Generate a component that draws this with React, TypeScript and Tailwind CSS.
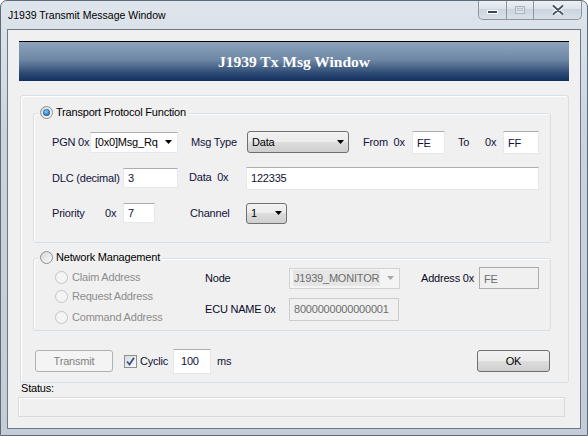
import React from 'react'

type RadioProps = { checked?: boolean; disabled?: boolean }

function Radio({ checked = false, disabled = false }: RadioProps) {
  return (
    <span
      className={
        'w-[13px] h-[13px] shrink-0 rounded-full border flex items-center justify-center ' +
        (disabled
          ? 'border-[#c4c4c4] bg-[#f4f4f4]'
          : 'border-[#8e8f8f] bg-[linear-gradient(135deg,#d6d6d6,#fbfbfb)]')
      }
    >
      {checked && (
        <span className="w-[7px] h-[7px] rounded-full bg-[radial-gradient(circle_at_45%_40%,#8ad8ff_0%,#2b74b8_55%,#163f72_100%)]" />
      )}
    </span>
  )
}

function Arrow({ color = '#000' }: { color?: string }) {
  return (
    <svg width="7" height="4" viewBox="0 0 7 4" className="shrink-0">
      <path d="M0 0h7L3.5 4z" fill={color} />
    </svg>
  )
}

const edit = 'bg-white border border-[#e3e9ef] border-t-[#abadb3] flex items-center pl-[4px] text-[#111133] shrink-0'
const button =
  'border border-[#707070] rounded-[3px] bg-[linear-gradient(#f2f2f2,#ebebeb_50%,#dddddd_50%,#cfcfcf)] flex items-center shrink-0'

export default function App() {
  return (
    <div className="w-[588px] h-[436px] overflow-hidden rounded-t-[7px] border border-[#5d6a78] bg-[linear-gradient(#dfe5ec,#cbd4de_30%,#c3ccd7)] font-['Liberation_Sans',Arial,sans-serif] text-[11px] text-black whitespace-nowrap">
      {/* title bar */}
      <div className="h-[28px] flex items-start">
        <div className="pl-[7px] mt-[8px] text-[10.5px] leading-[12px] text-black">J1939 Transmit Message Window</div>
        <div className="ml-auto mr-[5px] -mt-[1px] h-[20px] flex rounded-b-[5px] border border-t-0 border-[#8a96a4] overflow-hidden bg-[linear-gradient(#eef2f6,#dbe2ea_50%,#ccd5df_50%,#d8e0e8)]">
          <div className="w-[28px] flex items-center justify-center border-r border-[#8a96a4]">
            <span className="w-[11px] h-[4px] bg-[#3c4653] border border-white mt-[5px]" />
          </div>
          <div className="w-[27px] flex items-center justify-center border-r border-[#8a96a4]">
            <span className="w-[10px] h-[8px] border border-[#a9b3bd] bg-[#dde3e9] flex items-center justify-center">
              <span className="w-[6px] h-[3px] border border-[#b8c1ca]" />
            </span>
          </div>
          <div className="w-[47px] flex items-center justify-center">
            <svg width="12" height="10" viewBox="0 0 12 10">
              <path d="M1.5 1l9 8M10.5 1l-9 8" stroke="#ffffff" strokeWidth="4" strokeLinecap="round" />
              <path d="M1.5 1l9 8M10.5 1l-9 8" stroke="#4b5663" strokeWidth="2" strokeLinecap="round" />
            </svg>
          </div>
        </div>
      </div>

      {/* client area */}
      <div className="mx-[6px] h-[400px] border border-[#6c7a88] bg-[#f0f0f0] flex flex-col tracking-[-0.2px]">
        {/* banner */}
        <div className="ml-[11px] mt-[11px] w-[550px] h-[40px] border-t border-black bg-[linear-gradient(#8ca3bb,#6f88a5_45%,#2e4a74_80%,#13305f)] flex items-center justify-center tracking-normal">
          <span className="font-['Liberation_Serif',serif] font-bold text-[15.5px] text-white">J1939 Tx Msg Window</span>
        </div>

        {/* outer box */}
        <div className="ml-[12px] mt-[14px] w-[549px] h-[288px] rounded-[3px] border border-[#d5dfe5] shadow-[inset_1px_1px_0_#fff] flex flex-col">
          {/* transport protocol group */}
          <div className="ml-[12px] mt-[17px] w-[518px] h-[130px] rounded-[3px] border border-[#d5dfe5] shadow-[inset_1px_1px_0_#fff] flex flex-col text-[#12123a]">
            <div className="ml-[4px] -mt-[8px] h-[13px] px-[2px] self-start bg-[#f0f0f0] flex items-center gap-[3px] text-black">
              <Radio checked />
              <span>Transport Protocol Function</span>
            </div>

            <div className="mt-[12px] h-[22px] flex items-center pl-[18px]">
              <span className="w-[38px] shrink-0">PGN 0x</span>
              <div className={edit + ' w-[88px] h-[21px] border-[#dde3e9] pr-[5px] justify-between'}>
                <span className="text-black">[0x0]Msg_Rq</span>
                <Arrow />
              </div>
              <span className="ml-[13px] w-[56px] shrink-0">Msg Type</span>
              <div className={button + ' w-[102px] h-[22px] pl-[4px] pr-[4px] justify-between'}>
                <span className="text-black">Data</span>
                <Arrow />
              </div>
              <span className="ml-[14px] w-[49px] shrink-0">From&nbsp; 0x</span>
              <div className={edit + ' w-[33px] h-[23px] items-start pt-[3px]'}>FE</div>
              <span className="ml-[13px] w-[27px] shrink-0">To</span>
              <span className="w-[18px] shrink-0">0x</span>
              <div className={edit + ' w-[36px] h-[23px] items-start pt-[3px]'}>FF</div>
            </div>

            <div className="mt-[14px] h-[22px] flex items-center pl-[18px]">
              <span className="w-[71px] shrink-0">DLC (decimal)</span>
              <div className={edit + ' w-[55px] h-[20px]'}>3</div>
              <span className="ml-[11px] w-[57px] -mt-[2px] shrink-0">Data&nbsp; 0x</span>
              <div className={edit + ' w-[293px] h-[23px]'}>122335</div>
            </div>

            <div className="mt-[14px] h-[20px] flex items-center pl-[18px]">
              <span className="w-[53px] shrink-0">Priority</span>
              <span className="w-[18px] shrink-0">0x</span>
              <div className={edit + ' w-[32px] h-[20px]'}>7</div>
              <span className="ml-[35px] w-[56px] shrink-0">Channel</span>
              <div className={button + ' w-[41px] h-[21px] pl-[4px] pr-[4px] justify-between'}>
                <span className="text-black">1</span>
                <Arrow />
              </div>
            </div>
          </div>

          {/* network management group */}
          <div className="ml-[12px] mt-[15px] w-[518px] h-[73px] rounded-[3px] border border-[#d5dfe5] shadow-[inset_1px_1px_0_#fff] flex flex-col">
            <div className="ml-[4px] -mt-[8px] h-[13px] px-[2px] self-start bg-[#f0f0f0] flex items-center gap-[3px]">
              <Radio />
              <span>Network Management</span>
            </div>
            <div className="mt-[3px] flex items-start">
              <div className="ml-[21px] w-[150px] pt-[1px] flex flex-col text-[#8d8d8d] shrink-0">
                <div className="h-[19px] flex items-center gap-[4px]">
                  <Radio disabled />
                  <span>Claim Address</span>
                </div>
                <div className="h-[19px] flex items-center gap-[4px]">
                  <Radio disabled />
                  <span>Request Address</span>
                </div>
                <div className="mt-[2px] h-[19px] flex items-center gap-[4px]">
                  <Radio disabled />
                  <span>Command Address</span>
                </div>
              </div>
              <div className="flex flex-col text-[#0a0a28]">
                <div className="h-[22px] flex items-center">
                  <span className="w-[84px] shrink-0">Node</span>
                  <div className="w-[111px] h-[21px] shrink-0 border border-[#d2d2d2] bg-[#f4f4f4] flex items-center pl-[3px] pr-[5px] justify-between text-[#6d6d6d]">
                    <span className="bg-[#e6e6e6] px-[1px]">J1939_MONITOR</span>
                    <Arrow color="#a8a8a8" />
                  </div>
                  <span className="ml-[21px] w-[58px] shrink-0">Address 0x</span>
                  <div className="w-[60px] h-[22px] shrink-0 border border-[#adadad] bg-[#f0f0f0] flex items-start pt-[3px] pl-[4px] text-[#6d6d6d]">FE</div>
                </div>
                <div className="mt-[9px] h-[23px] flex items-center">
                  <span className="w-[84px] shrink-0">ECU NAME 0x</span>
                  <div className="w-[110px] h-[23px] shrink-0 border border-[#cccccc] bg-[#f0f0f0] flex items-center pl-[4px] text-[#6d6d6d]">8000000000000001</div>
                </div>
              </div>
            </div>
          </div>

          {/* bottom controls */}
          <div className="mt-[19px] h-[22px] flex items-center">
            <div className="ml-[14px] w-[78px] h-[22px] rounded-[3px] border border-[#adb2b5] bg-[#f4f4f4] flex items-center justify-center text-[#838383]">
              Transmit
            </div>
            <span className="ml-[11px] w-[13px] h-[13px] border border-[#8e8f8f] bg-[linear-gradient(135deg,#dadada,#fbfbfb)] flex items-center justify-center">
              <svg width="9" height="9" viewBox="0 0 9 9">
                <path d="M1 4.5L3.5 7.5L8 0.8" fill="none" stroke="#3a5591" strokeWidth="1.8" />
              </svg>
            </span>
            <span className="ml-[3px] w-[33px] text-[#111133]">Cyclic</span>
            <div className={edit + ' w-[38px] h-[25px] pl-[7px]'}>100</div>
            <span className="ml-[6px] text-[#111133]">ms</span>
            <div className={button + ' ml-auto mr-[18px] w-[73px] h-[22px] justify-center'}>OK</div>
          </div>
        </div>

        {/* status */}
        <div className="ml-[13px] -mt-[1px] h-[13px] leading-[13px]">Status:</div>
        <div className="ml-[10px] mt-[2px] w-[547px] h-[20px] border border-[#d9d9d9] shadow-[inset_1px_1px_0_#fff] bg-[#f0f0f0]" />
      </div>
    </div>
  )
}
